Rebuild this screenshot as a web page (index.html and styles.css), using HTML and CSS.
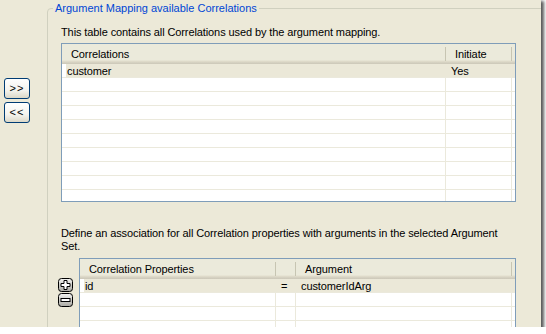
FILE: index.html
```html
<!DOCTYPE html>
<html>
<head>
  <meta charset="utf-8">
  <link rel="stylesheet" href="styles.css">
</head>
<body>
  <div class="window">
    <div class="move-buttons">
      <button class="move-btn">&gt;&gt;</button>
      <button class="move-btn">&lt;&lt;</button>
    </div>

    <fieldset class="group">
      <legend>Argument Mapping available Correlations</legend>
      <p class="hint hint-top">This table contains all Correlations used by the argument mapping.</p>

      <div class="list list-correlations">
        <div class="list-head">
          <div class="col">Correlations</div>
          <div class="col">Initiate</div>
          <div class="col"></div>
        </div>
        <div class="list-body">
          <div class="row selected"><div class="cell">customer</div><div class="cell">Yes</div><div class="cell"></div></div>
          <div class="row"><div class="cell"></div><div class="cell"></div><div class="cell"></div></div>
          <div class="row"><div class="cell"></div><div class="cell"></div><div class="cell"></div></div>
          <div class="row"><div class="cell"></div><div class="cell"></div><div class="cell"></div></div>
          <div class="row"><div class="cell"></div><div class="cell"></div><div class="cell"></div></div>
          <div class="row"><div class="cell"></div><div class="cell"></div><div class="cell"></div></div>
          <div class="row"><div class="cell"></div><div class="cell"></div><div class="cell"></div></div>
          <div class="row"><div class="cell"></div><div class="cell"></div><div class="cell"></div></div>
          <div class="row"><div class="cell"></div><div class="cell"></div><div class="cell"></div></div>
          <div class="row"><div class="cell"></div><div class="cell"></div><div class="cell"></div></div>
        </div>
      </div>

      <p class="hint hint-bottom">Define an association for all Correlation properties with arguments in the selected Argument Set.</p>

      <div class="mapping">
        <div class="row-tools">
          <button class="tool-btn" title="Add">
            <svg width="15" height="14" viewBox="0 0 15 14">
              <defs>
                <linearGradient id="tool-fill" x1="0" y1="0" x2="0" y2="1">
                  <stop offset="0" stop-color="#f4f4f2"/>
                  <stop offset="1" stop-color="#a9a8a2"/>
                </linearGradient>
              </defs>
              <rect x="0.5" y="0.5" width="14" height="13" rx="3" fill="url(#tool-fill)" stroke="#000"/>
              <polygon points="6,2.5 9,2.5 9,5.5 12,5.5 12,8.5 9,8.5 9,11.5 6,11.5 6,8.5 3,8.5 3,5.5 6,5.5" fill="#fff" stroke="#000"/>
            </svg>
          </button>
          <button class="tool-btn" title="Remove">
            <svg width="15" height="14" viewBox="0 0 15 14">
              <rect x="0.5" y="0.5" width="14" height="13" rx="3" fill="url(#tool-fill)" stroke="#000"/>
              <rect x="3" y="5.5" width="9" height="3" fill="#fff" stroke="#000"/>
            </svg>
          </button>
        </div>

        <div class="list list-properties">
          <div class="list-head">
            <div class="col">Correlation Properties</div>
            <div class="col"></div>
            <div class="col">Argument</div>
            <div class="col"></div>
          </div>
          <div class="list-body">
            <div class="row selected"><div class="cell">id</div><div class="cell eq">=</div><div class="cell">customerIdArg</div><div class="cell"></div></div>
            <div class="row"><div class="cell"></div><div class="cell"></div><div class="cell"></div><div class="cell"></div></div>
            <div class="row"><div class="cell"></div><div class="cell"></div><div class="cell"></div><div class="cell"></div></div>
            <div class="row"><div class="cell"></div><div class="cell"></div><div class="cell"></div><div class="cell"></div></div>
          </div>
        </div>
      </div>
    </fieldset>
  </div>
</body>
</html>
```

FILE: styles.css
```css
* {
  box-sizing: border-box;
  margin: 0;
  padding: 0;
}

body {
  background: #fff;
  font-family: "Liberation Sans", Arial, sans-serif;
  font-size: 11px;
  line-height: 13px;
  letter-spacing: -0.1px;
  color: #000;
}

.window {
  width: 541px;
  height: 327px;
  display: flex;
  padding-top: 2px;
  background: #ece9d8;
  overflow: hidden;
  box-shadow: 2px 2px 3px 1px rgba(0, 0, 0, 0.65);
}

/* left move buttons */
.move-buttons {
  width: 47px;
  flex: none;
  display: flex;
  flex-direction: column;
  gap: 3px;
  padding: 76px 0 0 4px;
}

.move-btn {
  width: 26px;
  height: 21px;
  border: 1px solid #003c74;
  border-radius: 3px;
  background: linear-gradient(to bottom, #fff 0%, #f4f3ee 60%, #dcd8c8 100%);
  font: inherit;
  color: #000;
  letter-spacing: 1px;
}

/* group box */
.group {
  flex: none;
  width: 520px;
  height: 360px;
  border: 1px solid #d0d0bf;
  border-radius: 4px;
  padding: 0 0 0 10px;
}

.group legend {
  margin-left: -5px;
  padding: 0 2px;
  color: #0046d5;
  letter-spacing: 0;
}

.hint {
  margin-left: 3px;
}

.hint-top {
  margin-top: 11px;
  margin-bottom: 4px;
}

.hint-bottom {
  width: 450px;
  margin-top: 25px;
  margin-bottom: 5px;
}

/* list views */
.list {
  border: 1px solid #7f9db9;
  background: #fff;
}

.list-correlations {
  width: 455px;
  margin-left: 3px;
}

.list-properties {
  width: 437px;
}

.list-head,
.row {
  display: grid;
}

.list-correlations .list-head,
.list-correlations .row {
  grid-template-columns: 384px 66px 1fr;
}

.list-properties .list-head,
.list-properties .row {
  grid-template-columns: 196px 20px 216px 1fr;
}

.list-head {
  height: 20px;
  align-items: center;
  background: linear-gradient(to bottom, #ebeadb 0%, #ebeadb 80%, #e2decd 85%, #d6d2c2 92%, #cbc7b8 100%);
}

.list-head .col {
  height: 14px;
  padding: 1px 0 0 9px;
  border-right: 1px solid #c7c5b2;
}

.list-head .col:last-child {
  border-right: none;
}

.list-correlations .list-body {
  height: 137px;
  overflow: hidden;
}

.row {
  height: 14px;
  border-bottom: 1px solid #ebe9dc;
}

.cell {
  padding: 1px 0 0 5px;
  border-right: 1px solid #ebe9dc;
  white-space: nowrap;
}

.cell:last-child {
  border-right: none;
}

.row.selected {
  background: #ebe8d8;
  box-shadow: inset 4px 0 #fff;
}

.row.selected .cell {
  border-right-color: transparent;
}

/* property mapping */
.mapping {
  display: flex;
  gap: 6px;
}

.row-tools {
  display: flex;
  flex-direction: column;
  gap: 1px;
  padding-top: 20px;
}

.tool-btn {
  width: 15px;
  height: 14px;
  border: none;
  background: none;
  display: block;
}

.tool-btn svg {
  display: block;
}
```
